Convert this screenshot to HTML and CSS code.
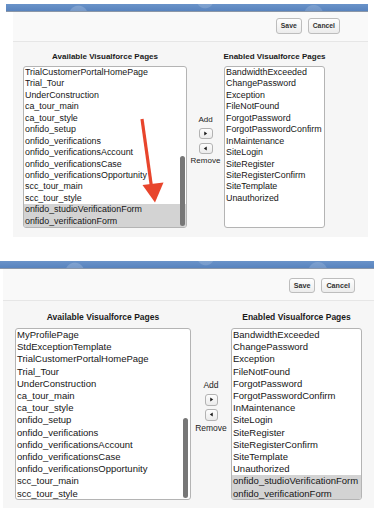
FILE: index.html
```html
<!DOCTYPE html>
<html>
<head>
<meta charset="utf-8">
<link rel="stylesheet" href="styles.css">
</head>
<body>
<section class="shot shot-a">
  <div class="bar"></div>
  <div class="panel">
    <div class="toolbar"><button class="btn">Save</button><button class="btn">Cancel</button></div>
    <div class="picker">
      <div class="col-head">Available Visualforce Pages</div>
      <div class="mover">
        <span class="mv-label">Add</span>
        <span class="mv-btn mv-first"><svg viewBox="0 0 6 6"><path d="M1.5 0.5 L5 3 L1.5 5.5 Z"/></svg></span>
        <span class="mv-btn mv-second"><svg viewBox="0 0 6 6"><path d="M4.5 0.5 L1 3 L4.5 5.5 Z"/></svg></span>
        <span class="mv-label mv-remove">Remove</span>
      </div>
      <div class="col-head">Enabled Visualforce Pages</div>
      <div class="list">
        <div class="row">TrialCustomerPortalHomePage</div>
        <div class="row">Trial_Tour</div>
        <div class="row">UnderConstruction</div>
        <div class="row">ca_tour_main</div>
        <div class="row">ca_tour_style</div>
        <div class="row">onfido_setup</div>
        <div class="row">onfido_verifications</div>
        <div class="row">onfido_verificationsAccount</div>
        <div class="row">onfido_verificationsCase</div>
        <div class="row">onfido_verificationsOpportunity</div>
        <div class="row">scc_tour_main</div>
        <div class="row">scc_tour_style</div>
        <div class="row sel">onfido_studioVerificationForm</div>
        <div class="row sel">onfido_verificationForm</div>
        <div class="thumb"></div>
      </div>
      <div class="list">
        <div class="row">BandwidthExceeded</div>
        <div class="row">ChangePassword</div>
        <div class="row">Exception</div>
        <div class="row">FileNotFound</div>
        <div class="row">ForgotPassword</div>
        <div class="row">ForgotPasswordConfirm</div>
        <div class="row">InMaintenance</div>
        <div class="row">SiteLogin</div>
        <div class="row">SiteRegister</div>
        <div class="row">SiteRegisterConfirm</div>
        <div class="row">SiteTemplate</div>
        <div class="row">Unauthorized</div>
      </div>
    </div>
  </div>
  <svg class="arrow" viewBox="6 0 362 237">
    <path d="M142 119 L151.5 187" stroke="#e8452c" stroke-width="3.2" fill="none"/>
    <path d="M142.5 185 L163.5 182.5 L155 202.5 Z" fill="#e8452c"/>
  </svg>
</section>

<section class="shot shot-b">
  <div class="bar"></div>
  <div class="panel">
    <div class="toolbar"><button class="btn">Save</button><button class="btn">Cancel</button></div>
    <div class="picker">
      <div class="col-head">Available Visualforce Pages</div>
      <div class="mover">
        <span class="mv-label">Add</span>
        <span class="mv-btn mv-first"><svg viewBox="0 0 6 6"><path d="M1.5 0.5 L5 3 L1.5 5.5 Z"/></svg></span>
        <span class="mv-btn mv-second"><svg viewBox="0 0 6 6"><path d="M4.5 0.5 L1 3 L4.5 5.5 Z"/></svg></span>
        <span class="mv-label mv-remove">Remove</span>
      </div>
      <div class="col-head">Enabled Visualforce Pages</div>
      <div class="list">
        <div class="row">MyProfilePage</div>
        <div class="row">StdExceptionTemplate</div>
        <div class="row">TrialCustomerPortalHomePage</div>
        <div class="row">Trial_Tour</div>
        <div class="row">UnderConstruction</div>
        <div class="row">ca_tour_main</div>
        <div class="row">ca_tour_style</div>
        <div class="row">onfido_setup</div>
        <div class="row">onfido_verifications</div>
        <div class="row">onfido_verificationsAccount</div>
        <div class="row">onfido_verificationsCase</div>
        <div class="row">onfido_verificationsOpportunity</div>
        <div class="row">scc_tour_main</div>
        <div class="row">scc_tour_style</div>
        <div class="thumb"></div>
      </div>
      <div class="list">
        <div class="row">BandwidthExceeded</div>
        <div class="row">ChangePassword</div>
        <div class="row">Exception</div>
        <div class="row">FileNotFound</div>
        <div class="row">ForgotPassword</div>
        <div class="row">ForgotPasswordConfirm</div>
        <div class="row">InMaintenance</div>
        <div class="row">SiteLogin</div>
        <div class="row">SiteRegister</div>
        <div class="row">SiteRegisterConfirm</div>
        <div class="row">SiteTemplate</div>
        <div class="row">Unauthorized</div>
        <div class="row sel">onfido_studioVerificationForm</div>
        <div class="row sel">onfido_verificationForm</div>
      </div>
    </div>
  </div>
</section>
</body>
</html>
```
FILE: styles.css
```css
html, body {
  margin: 0;
  padding: 0;
  background: #ffffff;
}
body {
  font-family: "Liberation Sans", Arial, Helvetica, sans-serif;
  color: #1a1a1a;
}

.shot {
  position: relative;
}

.bar {
  height: 7px;
  background:
    radial-gradient(circle at 20% 160%, rgba(255,255,255,0.18) 0 9px, transparent 10px),
    radial-gradient(circle at 55% -60%, rgba(255,255,255,0.15) 0 8px, transparent 9px),
    radial-gradient(circle at 85% 150%, rgba(255,255,255,0.15) 0 9px, transparent 10px),
    linear-gradient(#6a93c9, #5883be);
  border-bottom: 1px solid #8b97a8;
}

.panel {
  background: #f6f6f6;
  box-sizing: border-box;
}

.toolbar {
  display: flex;
  justify-content: flex-end;
  align-items: flex-start;
  gap: 6px;
  box-sizing: border-box;
  border-bottom: 1px solid #e6e6e6;
  background: #f9f9f9;
}

.btn {
  margin: 0;
  box-sizing: border-box;
  font-family: "Liberation Sans", Arial, sans-serif;
  font-weight: bold;
  color: #333333;
  border: 1px solid #bdbdbd;
  border-radius: 3px;
  background: linear-gradient(#fefefe, #ececec);
  padding: 0 4px;
  line-height: 1;
}

.picker {
  display: grid;
  align-items: start;
}

.col-head {
  font-weight: bold;
  text-align: center;
  white-space: nowrap;
  justify-self: center;
  color: #1a1a1a;
}

.mover {
  grid-column: 2;
  grid-row: 1 / span 2;
  align-self: center;
  display: flex;
  flex-direction: column;
  align-items: center;
  color: #222222;
}
.mv-label {
  display: block;
  white-space: nowrap;
}
.mv-btn {
  display: flex;
  align-items: center;
  justify-content: center;
  box-sizing: border-box;
  border: 1px solid #b3b3b3;
  border-radius: 3px;
  background: linear-gradient(#fdfdfd, #ebebeb);
}
.mv-btn svg {
  width: 5px;
  height: 5px;
  fill: #1a1a1a;
}

.list {
  grid-row: 2;
  position: relative;
  box-sizing: border-box;
  background: #ffffff;
  border: 1px solid #b4b4b4;
  border-radius: 3px;
  overflow: hidden;
}
.row {
  padding-left: 1px;
  white-space: nowrap;
  color: #161616;
}
.row.sel {
  background: #d3d3d3;
}
.thumb {
  position: absolute;
  width: 5px;
  border-radius: 3px;
  background: #777777;
}

/* ---------- first screenshot ---------- */
.shot-a {
  width: 362px;
  margin-left: 6px;
  padding-top: 4px;
}
.shot-a .panel {
  margin-left: 7px;
  height: 225px;
}
.shot-a .toolbar {
  height: 30px;
  padding: 6px 28px 0 0;
}
.shot-a .btn {
  height: 16px;
  font-size: 6.8px;
}
.shot-a .picker {
  padding: 10px 0 0 10px;
  grid-template-columns: 164px 37px 101px;
  row-gap: 4px;
}
.shot-a .col-head {
  font-size: 8px;
  line-height: 10px;
}
.shot-a .list {
  height: 162px;
}
.shot-a .row {
  font-size: 8.9px;
  line-height: 11.44px;
}
.shot-a .thumb {
  right: 1px;
  top: 89px;
  height: 70px;
}
.shot-a .mover {
  font-size: 8px;
  line-height: 9px;
}
.shot-a .mv-btn {
  width: 14px;
  height: 11px;
}
.shot-a .mv-first { margin-top: 4px; }
.shot-a .mv-second { margin-top: 4px; }
.shot-a .mv-remove { margin-top: 2px; }

.arrow {
  position: absolute;
  left: 0;
  top: 0;
  width: 362px;
  height: 237px;
  pointer-events: none;
}

/* ---------- second screenshot ---------- */
.shot-b {
  width: 374px;
  margin-top: 24px;
}
.shot-b .panel {
  margin-left: 3px;
  height: 239px;
}
.shot-b .toolbar {
  height: 32px;
  padding: 9px 19px 0 0;
}
.shot-b .btn {
  height: 15px;
  font-size: 7.2px;
}
.shot-b .picker {
  padding: 11px 0 0 12px;
  grid-template-columns: 176px 40px 131px;
  row-gap: 5px;
}
.shot-b .col-head {
  font-size: 8.5px;
  line-height: 11px;
}
.shot-b .list {
  height: 172px;
}
.shot-b .row {
  font-size: 9.5px;
  line-height: 12.2px;
}
.shot-b .thumb {
  right: 2px;
  top: 89px;
  height: 80px;
}
.shot-b .mover {
  font-size: 8.5px;
  line-height: 10px;
}
.shot-b .mv-btn {
  width: 13px;
  height: 12px;
}
.shot-b .mv-first { margin-top: 4px; }
.shot-b .mv-second { margin-top: 3px; }
.shot-b .mv-remove { margin-top: 2px; }
```
